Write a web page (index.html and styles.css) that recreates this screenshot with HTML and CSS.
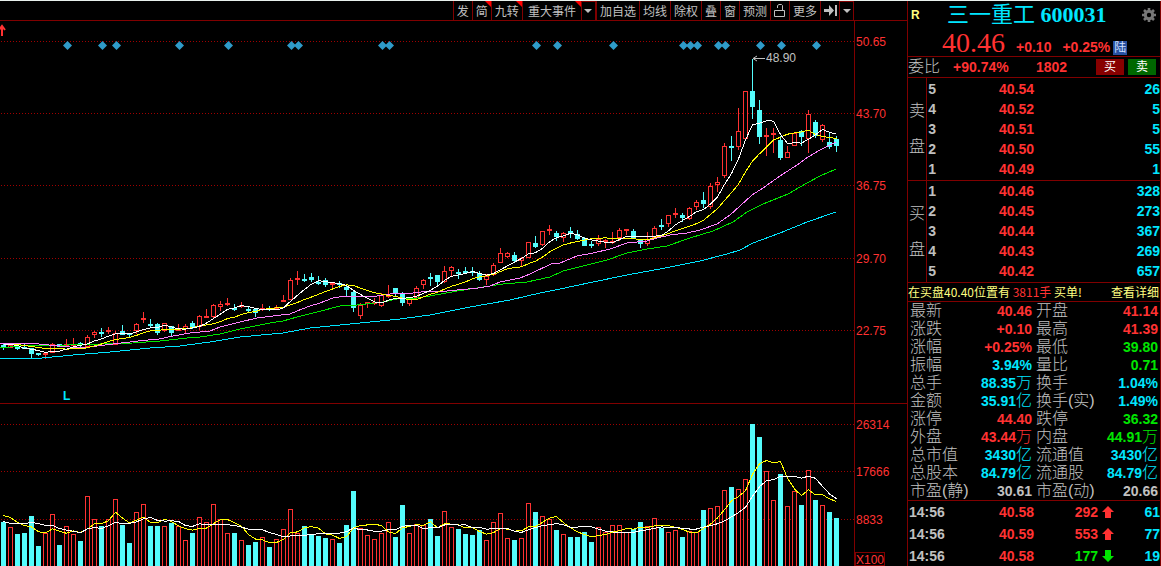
FILE: index.html
```html
<!DOCTYPE html>
<html lang="zh-CN">
<head>
    <meta charset="UTF-8">
    <meta name="viewport" content="width=device-width, initial-scale=1.0">
    <title>三一重工 600031</title>
    <link rel="stylesheet" href="styles.css">
</head>
<body>
    <div class="terminal">
        <main class="chart-pane">
            <div class="toolbar">
                <button>发</button>
                <button class="hot">简</button>
                <button class="hot">九转</button>
                <button class="hot wide">重大事件</button>
                <button class="icon arrow active" aria-label="展开事件"><svg width="8" height="4"><path d="M0 0h8L4 4z"/></svg></button>
                <button>加自选</button>
                <button>均线</button>
                <button>除权</button>
                <button>叠</button>
                <button>窗</button>
                <button>预测</button>
                <button class="icon" aria-label="解锁"><svg width="13" height="15" fill="none"><path d="M1.500 7.500h10v6h-10z M4.500 5V2.500L6 1.500h2.500L9.500 2.500V7.500" stroke="#c0c0c0"/></svg></button>
                <button>更多</button>
                <button class="icon" aria-label="跳到最后"><svg width="13" height="11"><path d="M0 4h5V0l5 5.500-5 5.500V7H0z M11 0h2v11h-2z"/></svg></button>
                <button class="icon arrow active" aria-label="更多选项"><svg width="8" height="4"><path d="M0 0h8L4 4z"/></svg></button>
            </div>
            <svg id="chart" class="chart" viewBox="0 21 907 545"></svg>
        </main>

        <aside class="quote">
            <header class="quote-head">
                <div class="title-row">
                    <span class="flag">R</span>
                    <h1>三一重工 <b>600031</b></h1>
                    <button class="gear" aria-label="设置">
                        <svg width="14" height="14" viewBox="-7 -7 14 14">
                            <circle r="3.700" fill="none" stroke="#777" stroke-width="3"/>
                            <path d="M0-7V-4M0 4V7M-7 0H-4M4 0H7M-5-5L-3-3M3 3L5 5M-5 5L-3 3M3-3L5-5" stroke="#777" stroke-width="2.600"/>
                        </svg>
                    </button>
                </div>
                <div class="price-row">
                    <span class="price">40.46</span>
                    <span>+0.10</span>
                    <span>+0.25%</span>
                    <i class="badge">陆</i>
                </div>
            </header>

            <div class="ratio">
                <span class="label">委比</span>
                <span class="ratio-pct">+90.74%</span>
                <span class="ratio-num">1802</span>
                <button class="buy">买</button>
                <button class="sell">卖</button>
            </div>

            <section class="depth asks">
                <div class="side"><span>卖</span><span>盘</span></div>
                <table>
                    <tr><th>5</th><td class="red">40.54</td><td>26</td></tr>
                    <tr><th>4</th><td class="red">40.52</td><td>5</td></tr>
                    <tr><th>3</th><td class="red">40.51</td><td>5</td></tr>
                    <tr><th>2</th><td class="red">40.50</td><td>55</td></tr>
                    <tr><th>1</th><td class="red">40.49</td><td>1</td></tr>
                </table>
            </section>
            <section class="depth">
                <div class="side"><span>买</span><span>盘</span></div>
                <table>
                    <tr><th>1</th><td class="red">40.46</td><td>328</td></tr>
                    <tr><th>2</th><td class="red">40.45</td><td>273</td></tr>
                    <tr><th>3</th><td class="red">40.44</td><td>367</td></tr>
                    <tr><th>4</th><td class="red">40.43</td><td>269</td></tr>
                    <tr><th>5</th><td class="red">40.42</td><td>657</td></tr>
                </table>
            </section>

            <div class="notice">
                <span>在买盘40.40位置有 <em>3811手</em> 买单!</span>
                <a href="#">查看详细</a>
            </div>

            <table class="stats">
                <tr><th>最新</th><td class="red">40.46</td><th>开盘</th><td class="red">41.14</td></tr>
                <tr><th>涨跌</th><td class="red">+0.10</td><th>最高</th><td class="red">41.39</td></tr>
                <tr><th>涨幅</th><td class="red">+0.25%</td><th>最低</th><td class="green">39.80</td></tr>
                <tr><th>振幅</th><td class="cyan">3.94%</td><th>量比</th><td class="green">0.71</td></tr>
                <tr><th>总手</th><td class="cyan">88.35<i>万</i></td><th>换手</th><td class="cyan">1.04%</td></tr>
                <tr><th>金额</th><td class="cyan">35.91<i>亿</i></td><th>换手(实)</th><td class="cyan">1.49%</td></tr>
                <tr><th>涨停</th><td class="red">44.40</td><th>跌停</th><td class="green">36.32</td></tr>
                <tr><th>外盘</th><td class="red">43.44<i>万</i></td><th>内盘</th><td class="green">44.91<i>万</i></td></tr>
                <tr><th>总市值</th><td class="cyan">3430<i>亿</i></td><th>流通值</th><td class="cyan">3430<i>亿</i></td></tr>
                <tr><th>总股本</th><td class="cyan">84.79<i>亿</i></td><th>流通股</th><td class="cyan">84.79<i>亿</i></td></tr>
                <tr><th>市盈(静)</th><td>30.61</td><th>市盈(动)</th><td>20.66</td></tr>
            </table>

            <table class="ticks">
                <tr><td>14:56</td><td class="red">40.58</td><td class="red">292</td><td class="red"><svg width="12" height="12"><path d="M6 0l6 6H9v6H3V6H0z"/></svg></td><td class="cyan">61</td></tr>
                <tr><td>14:56</td><td class="red">40.59</td><td class="red">553</td><td class="red"><svg width="12" height="12"><path d="M6 0l6 6H9v6H3V6H0z"/></svg></td><td class="cyan">77</td></tr>
                <tr><td>14:56</td><td class="red">40.58</td><td class="green">177</td><td class="green"><svg width="12" height="12"><path d="M6 12l6-6H9V0H3v6H0z"/></svg></td><td class="cyan">19</td></tr>
            </table>
        </aside>
    </div>
    <script src="chart.js"></script>
</body>
</html>
```
FILE: styles.css
```css
* {
    box-sizing: border-box;
}

body {
    margin: 0;
    background-color: #000;
    color: #c0c0c0;
    font-family: "Liberation Sans", "Noto Sans CJK SC", sans-serif;
    font-size: 14px;
}

button {
    margin: 0;
    padding: 0;
    border: none;
    background: none;
    color: inherit;
    font-family: inherit;
    cursor: pointer;
}

table {
    width: 100%;
    border-collapse: collapse;
    table-layout: fixed;
}

th, td {
    padding: 0;
}

.red {
    color: #ff3232;
}

.green {
    color: #00e600;
}

.cyan {
    color: #00e6ff;
}

.terminal {
    display: flex;
    border-top: 1px solid #e8f0ec;
}

/* Chart side */
.chart-pane {
    flex: 1;
    min-width: 0;
}

.toolbar {
    display: flex;
    justify-content: flex-end;
    height: 20px;
    padding-right: 53px;
    border-bottom: 1px solid #800000;
}

.toolbar button {
    display: flex;
    align-items: center;
    justify-content: center;
    position: relative;
    padding: 0 3px;
    border-left: 1px solid #800000;
    font-family: "Noto Sans CJK SC", sans-serif;
    font-size: 12px;
    line-height: 18px;
}

.toolbar .wide {
    padding: 0 5px;
}

.toolbar .icon {
    width: 19px;
}

.toolbar .arrow {
    width: 15px;
}

.toolbar .active {
    border: 1px solid #800000;
    border-bottom: none;
}

.toolbar svg {
    flex: none;
    fill: #c0c0c0;
}

.toolbar svg[fill="none"] {
    fill: none;
}

/* Red corner on new features */
.hot::after {
    content: "";
    position: absolute;
    top: 0;
    right: 0;
    border-top: 6px solid #ff0000;
    border-left: 6px solid transparent;
}

.chart {
    display: block;
    width: 100%;
}

.chart text {
    font-size: 12px;
    fill: #ff3232;
}

.chart .note {
    fill: #c0c0c0;
}

.chart .mark {
    fill: #00e6ff;
    font-weight: bold;
}

.chart .crisp {
    shape-rendering: crispEdges;
}

.chart .frame {
    fill: none;
    stroke: #800000;
}

.chart .dots {
    fill: none;
    stroke: #a00000;
    stroke-dasharray: 1 2;
}

.chart .up {
    fill: #000;
    stroke: #ff3232;
}

.chart .down {
    fill: #54fcfc;
    stroke: #54fcfc;
}

.chart .ma {
    fill: none;
}

.chart .diamond {
    fill: #2f9bc9;
}

/* Quote side */
.quote {
    flex: none;
    width: 254px;
    border-left: 1px solid #800000;
    border-right: 1px solid #800000;
    font-weight: bold;
}

.quote-head {
    height: 56px;
    border-bottom: 1px solid #800000;
}

.title-row {
    display: flex;
    align-items: center;
    height: 28px;
    padding: 0 4px 0 3px;
}

.flag {
    width: 36px;
    color: #ffff80;
    font-size: 12px;
}

h1 {
    flex: 1;
    margin: 0;
    color: #00e6ff;
    font-family: "Liberation Serif", "Noto Sans CJK SC", serif;
    font-size: 22px;
    font-weight: normal;
    line-height: 28px;
}

h1 b {
    font-weight: bold;
}

.gear {
    height: 14px;
}

.gear svg {
    display: block;
}

.price-row {
    display: flex;
    align-items: baseline;
    gap: 11px;
    height: 28px;
    padding-left: 34px;
    color: #ff3232;
    line-height: 28px;
}

.price {
    font-family: "Liberation Serif", serif;
    font-size: 28px;
    font-weight: normal;
}

.badge {
    margin-left: -8px;
    background-color: #2850a0;
    color: #d0e0ff;
    font-size: 12px;
    font-style: normal;
    font-weight: normal;
    line-height: 14px;
    padding: 0 1px;
}

.ratio {
    display: flex;
    align-items: center;
    height: 21px;
    border-bottom: 1px solid #800000;
    color: #ff3232;
}

.ratio .label {
    width: 45px;
    color: #c0c0c0;
    font-size: 16px;
    font-weight: 300;
    line-height: 20px;
}

.ratio-pct {
    width: 83px;
}

.ratio-num {
    flex: 1;
}

.ratio button {
    width: 28px;
    height: 16px;
    margin-right: 4px;
    color: #fff;
    font-size: 12px;
    line-height: 16px;
}

.ratio .buy {
    background-color: #880000;
}

.ratio .sell {
    background-color: #006800;
}

.depth {
    display: flex;
    border-bottom: 1px solid #800000;
}

.side {
    display: flex;
    flex-direction: column;
    justify-content: center;
    gap: 16px;
    flex: none;
    width: 19px;
    border-right: 1px solid #800000;
    font-size: 16px;
    font-weight: 300;
    line-height: 20px;
    padding-left: 1px;
}

.depth table {
    margin-bottom: 1px;
}

.asks table {
    margin-top: 1px;
}

.depth td, .depth th {
    height: 20px;
    line-height: 20px;
    text-align: right;
    color: #00e6ff;
}

.depth th {
    width: 9px;
    color: #c0c0c0;
}

.depth .red {
    width: 98px;
    color: #ff3232;
}

.notice {
    display: flex;
    justify-content: space-between;
    height: 19px;
    padding-right: 1px;
    border-bottom: 1px solid #800000;
    color: #ffff80;
    font-family: "Noto Sans CJK SC", sans-serif;
    font-size: 12px;
    font-weight: normal;
    line-height: 18px;
}

.notice em {
    color: #ff3232;
    font-style: normal;
}

.notice a {
    color: #ffff80;
    text-decoration: none;
}

.stats {
    border-bottom: 1px solid #800000;
}

.stats td, .stats th {
    height: 18px;
    line-height: 18px;
    text-align: right;
    white-space: nowrap;
}

.stats th {
    width: 61px;
    padding-left: 2px;
    font-size: 16px;
    font-weight: 300;
    text-align: left;
}

.stats td {
    padding-right: 2px;
}

.stats i {
    font-size: 16px;
    font-style: normal;
    font-weight: 300;
    line-height: 16px;
}

.ticks td {
    height: 22px;
    line-height: 22px;
    text-align: right;
}

.ticks td:first-child {
    width: 38px;
    padding-left: 1px;
    text-align: left;
}

.ticks td:nth-child(2) {
    width: 88px;
}

.ticks td:nth-child(3) {
    width: 64px;
}

.ticks td:nth-child(4) {
    width: 16px;
}

.ticks svg {
    display: block;
    margin-left: auto;
    fill: currentColor;
}
```
FILE: chart.js
```javascript
// One candle per entry: direction, high, body top, body bottom, low, volume top (chart units)
const candles = `
c 344 345 347 350 522|r 344 345 348 348 527|c 345 347 348 350 534|c 344 347 349 349 533|c 348 348 354 359 516
c 353 353 355 356 546|r 353 353 355 359 533|r 343 344 353 353 514|c 344 344 347 347 545|r 339 344 346 346 526
r 338 344 346 346 534|c 342 343 345 348 541|r 335 337 347 347 496|r 331 332 335 338 519|c 328 332 334 337 526
r 327 330 331 334 519|r 331 333 345 345 499|c 325 331 335 335 525|c 333 333 335 337 543|r 323 324 331 334 512
r 312 318 320 323 504|c 319 324 325 327 526|c 323 324 333 335 526|r 323 323 331 332 526|c 326 326 333 336 523
r 324 328 331 331 526|r 324 326 329 333 540|c 321 323 327 329 533|r 315 316 327 330 517|r 309 316 317 318 522
r 304 305 317 318 504|r 301 304 307 311 519|r 298 303 304 306 533|c 304 308 309 311 533|r 302 305 307 308 540
c 307 309 310 312 545|c 308 309 313 317 542|r 304 308 310 311 537|c 306 308 309 311 547|r 305 307 309 309 539
r 295 300 301 302 529|r 278 280 300 300 509|r 271 278 280 285 533|c 274 279 280 282 526|c 273 277 280 282 534
c 276 282 283 285 536|c 278 280 285 287 538|r 283 283 285 288 539|c 281 283 284 288 543|c 285 287 290 296 525
c 290 292 308 312 491|r 303 305 316 319 528|r 302 302 304 308 535|r 298 302 303 305 539|r 293 295 306 307 533
r 285 295 297 298 522|c 288 288 294 297 537|c 292 293 303 306 505|r 299 299 304 306 533|r 286 288 298 298 524
r 279 280 285 289 525|c 273 277 279 286 519|c 275 275 282 285 536|r 266 271 282 283 511|r 266 267 271 277 527
c 269 272 273 279 529|c 267 271 272 274 534|c 267 271 272 276 535|c 271 273 280 281 530|r 274 276 280 285 540
r 263 265 275 276 522|r 248 253 263 263 513|r 252 253 257 258 538|c 252 255 261 262 540|r 257 258 261 266 538
r 242 242 258 258 503|c 236 243 247 248 512|r 231 231 245 246 516|r 225 229 231 235 519|c 231 233 237 241 530
r 232 233 238 242 534|c 227 231 234 238 537|c 230 234 239 240 537|c 237 238 246 246 532|c 241 244 245 248 542
r 235 239 244 246 527|r 239 240 242 248 532|r 232 241 242 244 525|r 228 230 238 241 525|r 229 229 231 235 532
c 229 231 238 239 529|c 239 239 244 248 522|r 232 239 244 246 526|r 226 228 238 239 518|c 219 225 226 230 528
r 215 215 224 227 532|r 208 213 215 218 530|c 213 215 218 222 537|r 207 208 219 220 531|r 200 202 207 210 532
c 192 200 204 208 510|r 183 186 207 209 508|r 177 182 185 192 506|r 143 146 176 178 490|c 136 146 147 161 487
r 108 131 147 150 489|r 91 91 139 140 479|c 59 91 107 119 424|c 100 110 137 144 437|r 128 135 137 156 471
r 128 133 135 153 500|c 136 140 158 160 474|r 146 152 158 158 506|r 132 133 146 146 491|c 130 131 137 146 505
r 110 114 139 153 470|c 120 122 136 138 500|r 124 125 140 142 505|c 133 142 147 149 512|c 136 139 146 152 518
`.trim().split(/[|\n]/).map((row) => {
    const [dir, ...n] = row.split(' ');
    const [high, top, bottom, low, vol] = n.map(Number);
    return { dir, high, top, bottom, low, vol, close: dir === 'r' ? top : bottom };
});

const STEP = 7;
const centre = (i) => i * STEP + 3.5;

// Moving average; seed holds the points that need earlier days
function average(key, days, seed) {
    return candles.map((c, i) => {
        let y = seed[i];
        if (i >= days - 1) {
            y = candles.slice(i - days + 1, i + 1).reduce((sum, d) => sum + d[key], 0) / days;
        }
        return `${centre(i)},${y + 0.5}`;
    }).join(' ');
}

const line = (points, color) => `<polyline class="ma crisp" points="${points}" stroke="${color}"/>`;

let out = '';

[[41, '50.65'], [113, '43.70'], [185, '36.75'], [258, '29.70'], [330, '22.75'], [424, '26314'], [471, '17666'], [519, '8833']].forEach(([y, label]) => {
    out += `<path class="dots crisp" d="M1 ${y + 0.5}H854"/>`;
    out += `<text x="856" y="${y + 5}">${label}</text>`;
});
out += '<path class="frame crisp" d="M854.5 21V566M0 403.5H907M855.5 552.5H884.5V565.5H855.5Z"/>';
out += '<text x="856" y="564">X100</text>';

[9, 14, 16, 25, 32, 41, 42, 54, 55, 76, 79, 87, 97, 98, 99, 102, 103, 108, 111, 116].forEach((i) => {
    out += `<path class="diamond" d="M${centre(i) + 1} 41l4.500 4.500-4.500 4.500-4.500-4.500z"/>`;
});

candles.forEach((c, i) => {
    const x = centre(i);
    const cls = c.dir === 'r' ? 'up' : 'down';
    const h = Math.max(c.bottom - c.top - 1, 1);
    out += `<g class="${cls} crisp"><path d="M${x} ${c.high}V${c.low}"/>`;
    out += `<rect x="${x - 2}" y="${c.top + 0.5}" width="4" height="${h}"/>`;
    out += `<rect x="${x - 2}" y="${c.vol + 0.5}" width="4" height="${570 - c.vol}"/></g>`;
});

out += line('0,358 42,358 73,355 110,352 150,348 180,346 210,342 240,337 283,333 310,328 340,325 370,322 400,319 430,315 470,307 510,300 540,293 560,289 593,282 627,275 660,269 700,261 727,254 740,250 753,243 780,233 807,222 836,212', '#00e6ff');
out += line('0,348 20,346 67,345 100,344 133,343 160,341 187,338 200,337 220,334 240,329 270,323 283,321 297,317 317,312 340,306 357,305 383,302 397,299 417,298 430,296 457,291 477,288 503,284 527,282 550,277 563,271 587,265 607,260 627,253 647,249 667,246 690,238 713,231 733,222 747,212 763,204 788,194 807,183 820,176 836,169', '#00e600');
out += line('0,343 28,343 70,347 90,347 105,345 138,341 159,339 173,336 190,333 210,331 220,327 240,322 257,318 273,316 290,314 297,311 310,306 320,303 333,298 345,296 377,296 390,294 413,293 430,291 447,291 478,288 490,286 500,282 520,278 530,274 553,263 560,263 577,256 593,253 610,249 627,243 647,241 657,238 670,235 687,233 700,230 717,224 730,215 740,206 752,195 763,188 780,176 797,165 808,157 820,150 836,142', '#ff80ff');
out += line(average('close', 10, [344, 344, 344, 345, 346, 347, 348, 348, 348]), '#ffff00');
out += line(average('close', 5, [344, 344, 345, 348]), '#ffffff');
out += line(average('vol', 5, [515, 517, 522, 525]), '#ffff00');
out += line(average('vol', 10, [521, 523, 523, 523, 522, 523, 525, 525, 528]), '#ffffff');

out += '<path d="M753 58.500H765M757 56L753 58.500 757 61" fill="none" stroke="#c0c0c0"/>';
out += '<text class="note" x="766" y="62">48.90</text>';
out += '<text class="mark" x="63" y="400">L</text>';
out += '<path d="M-1 30L2 26 5 30M2 27V36" fill="none" stroke="#ff3232" stroke-width="2"/>';

document.getElementById('chart').innerHTML = out;
```
